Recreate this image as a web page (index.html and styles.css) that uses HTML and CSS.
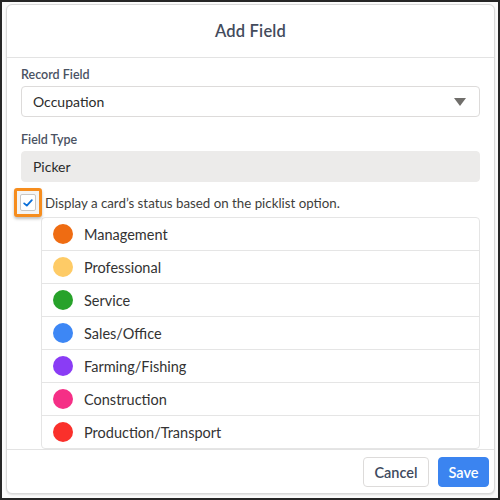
FILE: index.html
```html
<!DOCTYPE html>
<html>
<head>
<meta charset="utf-8">
<link rel="stylesheet" href="styles.css">
</head>
<body>
<div class="frame">
  <div class="modal">
    <div class="modal-header"><h2 class="title">Add Field</h2></div>
    <div class="modal-body">
      <div class="field">
        <label class="label">Record Field</label>
        <div class="select">
          <span>Occupation</span>
          <svg class="caret" width="12" height="8" viewBox="0 0 12 8"><path d="M0 0 H12 L6 8 Z" fill="#706e6b"/></svg>
        </div>
      </div>
      <div class="field field-last">
        <label class="label">Field Type</label>
        <div class="readonly">Picker</div>
      </div>
      <div class="check-row">
        <span class="highlight">
          <span class="checkbox">
            <svg width="10" height="8" viewBox="0 0 10 8"><path d="M1.2 4.4 L3.8 6.6 L8.8 1.2" fill="none" stroke="#0b6fd8" stroke-width="1.8" stroke-linecap="round" stroke-linejoin="round"/></svg>
          </span>
        </span>
        <span class="check-text">Display a card’s status based on the picklist option.</span>
      </div>
      <ul class="options">
        <li class="option"><span class="dot dot-orange"></span>Management</li>
        <li class="option"><span class="dot dot-yellow"></span>Professional</li>
        <li class="option"><span class="dot dot-green"></span>Service</li>
        <li class="option"><span class="dot dot-blue"></span>Sales/Office</li>
        <li class="option"><span class="dot dot-purple"></span>Farming/Fishing</li>
        <li class="option"><span class="dot dot-pink"></span>Construction</li>
        <li class="option"><span class="dot dot-red"></span>Production/Transport</li>
      </ul>
    </div>
    <div class="modal-footer">
      <button class="btn btn-neutral">Cancel</button>
      <button class="btn btn-brand">Save</button>
    </div>
  </div>
</div>
</body>
</html>
```
FILE: styles.css
```css
* { box-sizing: border-box; }
html, body { margin: 0; padding: 0; }
body {
  font-family: Lato, "Open Sans", "Liberation Sans", sans-serif;
  color: #3e3e3c;
}
.frame {
  width: 500px;
  height: 500px;
  border: 2px solid #262626;
  background: #fbfbfb;
  padding: 2px 3px 4px 4px;
  display: flex;
}
.modal {
  flex: 1;
  background: #fff;
  border: 1px solid #d9d9d9;
  border-radius: 6px;
  display: flex;
  flex-direction: column;
  overflow: hidden;
  box-shadow: 0 1px 2px rgba(0,0,0,0.12);
}
.modal-header {
  height: 53px;
  flex: none;
  border-bottom: 1px solid #e3e3e3;
  display: flex;
  align-items: center;
  justify-content: center;
  padding-bottom: 1px;
}
.title {
  margin: 0;
  font-size: 16.5px;
  font-weight: 600;
  color: #434b5c;
  letter-spacing: 0.2px;
}
.modal-body {
  flex: 1;
  overflow: hidden;
  padding: 9px 14px 0 14px;
}
.field { margin-bottom: 15px; }
.field-last { margin-bottom: 6px; }
.label {
  display: block;
  font-size: 12.5px;
  line-height: 16px;
  font-weight: 600;
  color: #4a5262;
  margin-bottom: 3px;
}
.select, .readonly {
  height: 31px;
  border-radius: 4px;
  display: flex;
  align-items: center;
  padding: 0 11px;
  font-size: 14px;
  color: #2b2b2b;
}
.select {
  border: 1px solid #dddbda;
  justify-content: space-between;
}
.caret { margin-right: 2px; }
.readonly {
  background: #ecebea;
  border: 1px solid #ecebea;
}
.check-row {
  display: flex;
  align-items: center;
  margin-left: -7px;
  height: 29px;
}
.highlight {
  width: 28px;
  height: 29px;
  border: 3px solid #f68d1e;
  border-radius: 3px;
  display: flex;
  align-items: center;
  justify-content: center;
  box-shadow: 0 2px 3px rgba(0,0,0,0.25);
  background: #f4f4f4;
}
.checkbox {
  width: 16px;
  height: 17px;
  border: 1px solid #c9c7c5;
  border-radius: 2px;
  background: #fff;
  display: flex;
  align-items: center;
  justify-content: center;
}
.check-text {
  margin-left: 3px;
  font-size: 13.3px;
  color: #3e3e3c;
}
.options {
  list-style: none;
  margin: 0 0 0 20px;
  padding: 0;
  border: 1px solid #e5e5e5;
  border-radius: 4px;
}
.option {
  height: 33px;
  display: flex;
  align-items: center;
  padding-left: 11px;
  font-size: 14.5px;
  color: #333;
  border-top: 1px solid #e5e5e5;
}
.option:first-child { border-top: none; height: 32px; }
.dot {
  width: 20px;
  height: 20px;
  border-radius: 50%;
  margin-right: 11px;
  flex: none;
}
.dot-orange { background: #ef6c12; }
.dot-yellow { background: #fecb66; }
.dot-green { background: #27a22a; }
.dot-blue { background: #3d87f5; }
.dot-purple { background: #8a3cf5; }
.dot-pink { background: #f52f86; }
.dot-red { background: #fa302b; }
.modal-footer {
  flex: none;
  height: 44px;
  border-top: 1px solid #e3e3e3;
  display: flex;
  justify-content: flex-end;
  align-items: center;
  gap: 9px;
  padding: 1px 5px 0 0;
}
.btn {
  height: 30px;
  border-radius: 4px;
  font-family: inherit;
  font-size: 14.5px;
  font-weight: 600;
  padding: 0;
}
.btn-neutral {
  width: 66px;
  background: #fff;
  border: 1px solid #dddbda;
  color: #3e4a5e;
}
.btn-brand {
  width: 51px;
  background: #3b84f0;
  border: 1px solid #3b84f0;
  color: #fff;
}
```
